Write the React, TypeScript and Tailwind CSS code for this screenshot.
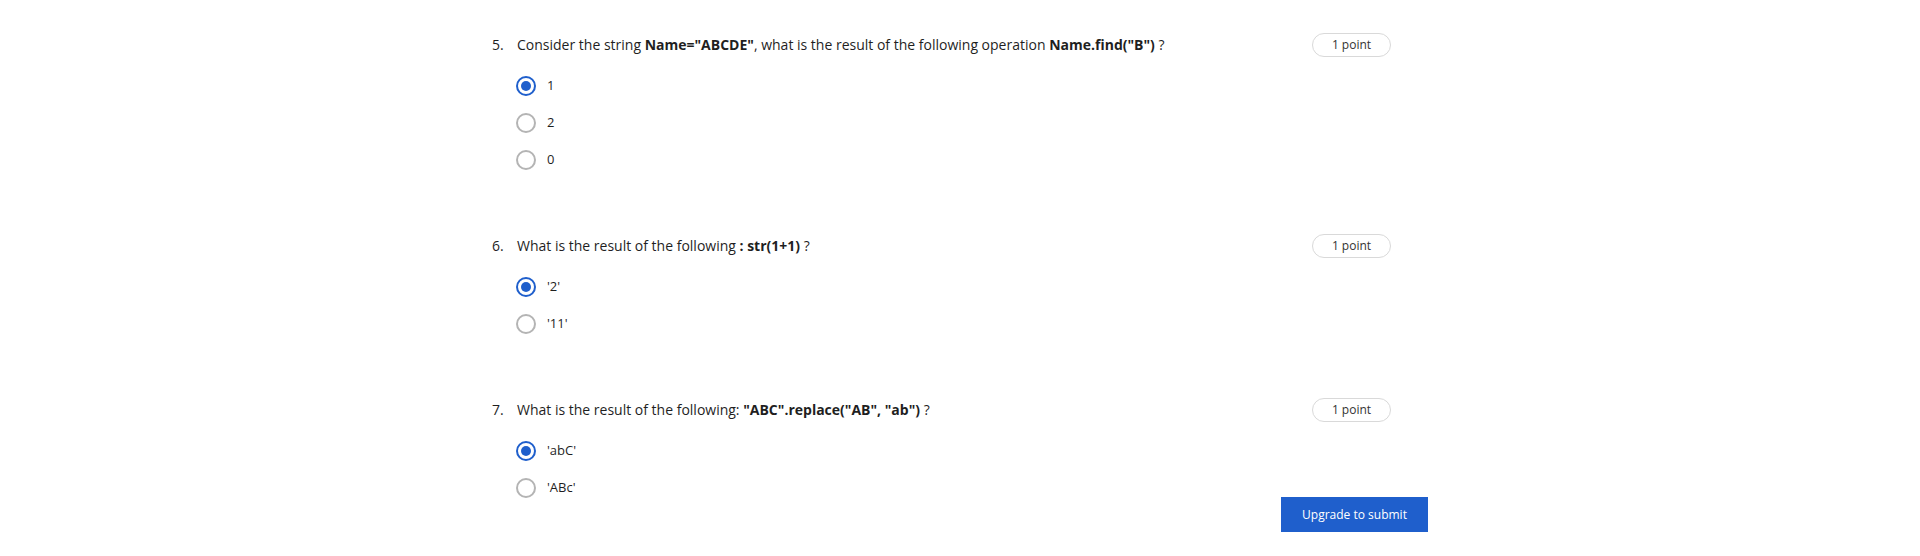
import React, { useState } from 'react';

type Part = { text: string; bold?: boolean };

interface Question {
  num: number;
  parts: Part[];
  options: string[];
  selected: number;
}

const questions: Question[] = [
  {
    num: 5,
    parts: [
      { text: 'Consider the string ' },
      { text: 'Name="ABCDE"', bold: true },
      { text: ', what is the result of the following operation ' },
      { text: 'Name.find("B")', bold: true },
      { text: ' ?' },
    ],
    options: ['1', '2', '0'],
    selected: 0,
  },
  {
    num: 6,
    parts: [
      { text: 'What is the result of the following ' },
      { text: ': str(1+1)', bold: true },
      { text: ' ?' },
    ],
    options: ["'2'", "'11'"],
    selected: 0,
  },
  {
    num: 7,
    parts: [
      { text: 'What is the result of the following: ' },
      { text: '"ABC".replace("AB", "ab")', bold: true },
      { text: ' ?' },
    ],
    options: ["'abC'", "'ABc'"],
    selected: 0,
  },
];

const Radio = ({ checked }: { checked: boolean }) =>
  checked ? (
    <span className="w-5 h-5 rounded-full border-2 border-[#1f5fcc] flex items-center justify-center shrink-0">
      <span className="w-[10px] h-[10px] rounded-full bg-[#1f5fcc]" />
    </span>
  ) : (
    <span className="w-5 h-5 rounded-full border-2 border-[#b4b4b4] shrink-0" />
  );

const QuestionBlock = ({ q, first }: { q: Question; first: boolean }) => {
  const [selected, setSelected] = useState(q.selected);

  return (
    <div className={first ? '' : 'mt-[56px]'}>
      <div className="flex items-center h-6 pr-[37px] text-sm">
        <span className="w-[25px] shrink-0">{q.num}.</span>
        <p className="flex-1">
          {q.parts.map((p, i) => (
            <span key={i} className={p.bold ? 'font-bold' : ''}>
              {p.text}
            </span>
          ))}
        </p>
        <span className="h-6 w-[79px] rounded-full border border-[#d9d9d9] flex items-center justify-center text-xs text-[#333]">
          1 point
        </span>
      </div>
      <div className="mt-[10px] pl-[24px]">
        {q.options.map((opt, i) => (
          <label
            key={i}
            onClick={() => setSelected(i)}
            className="flex items-center h-[37px] gap-[11px] cursor-pointer"
          >
            <Radio checked={selected === i} />
            <span>{opt}</span>
          </label>
        ))}
      </div>
    </div>
  );
};

export default function App() {
  return (
    <div
      className="min-h-[556px] bg-white text-[13px] text-[#1f1f1f] pt-[33px]"
      style={{ fontFamily: '"Open Sans", Arial, sans-serif' }}
    >
      <div className="w-[936px] mx-auto">
        {questions.map((q, i) => (
          <QuestionBlock key={q.num} q={q} first={i === 0} />
        ))}
        <div className="flex justify-end -mt-[9px]">
          <button className="w-[147px] h-[35px] bg-[#1f5fcc] text-white text-xs">
            Upgrade to submit
          </button>
        </div>
      </div>
    </div>
  );
}
